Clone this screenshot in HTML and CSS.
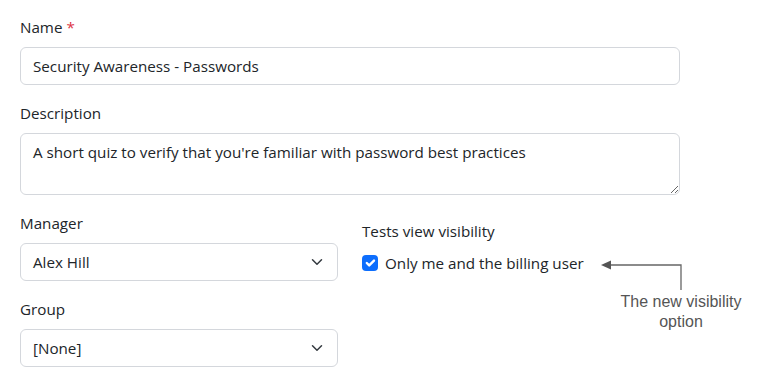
FILE: index.html
```html
<!DOCTYPE html>
<html>
<head>
<meta charset="utf-8">
<link rel="stylesheet" href="styles.css">
</head>
<body>
<div class="page">
  <form class="form">
    <div class="field">
      <label class="label">Name <span class="req">*</span></label>
      <input class="control" type="text" value="Security Awareness - Passwords">
    </div>
    <div class="field">
      <label class="label">Description</label>
      <textarea class="control area" rows="2">A short quiz to verify that you're familiar with password best practices</textarea>
    </div>
    <div class="row">
      <div class="col">
        <div class="field">
          <label class="label">Manager</label>
          <div class="select"><span>Alex Hill</span>
            <svg class="chev" viewBox="0 0 16 16" width="16" height="12"><path d="m2 5 6 6 6-6" fill="none" stroke="#343a40" stroke-width="2" stroke-linecap="round" stroke-linejoin="round"/></svg>
          </div>
        </div>
        <div class="field last">
          <label class="label">Group</label>
          <div class="select"><span>[None]</span>
            <svg class="chev" viewBox="0 0 16 16" width="16" height="12"><path d="m2 5 6 6 6-6" fill="none" stroke="#343a40" stroke-width="2" stroke-linecap="round" stroke-linejoin="round"/></svg>
          </div>
        </div>
      </div>
      <div class="col right">
        <div class="label vis">Tests view visibility</div>
        <div class="check">
          <span class="box"><svg viewBox="0 0 20 20" width="16" height="16"><path d="M6 10l3 3 6-6" fill="none" stroke="#fff" stroke-width="3" stroke-linecap="round" stroke-linejoin="round"/></svg></span>
          <span class="check-label">Only me and the billing user</span>
        </div>
      </div>
    </div>
  </form>
  <svg class="arrow" width="100" height="40" viewBox="0 0 100 40">
    <path d="M10 9 H82 V34" fill="none" stroke="#666" stroke-width="1.3"/>
    <path d="M2 9 L12 4.5 L12 13.5 Z" fill="#555"/>
  </svg>
  <div class="note">The new visibility<br>option</div>
</div>
</body>
</html>
```

FILE: styles.css
```css
html, body {
  margin: 0;
  background: #fff;
}
.page {
  position: relative;
  width: 772px;
  height: 380px;
  overflow: hidden;
  font-family: "Open Sans", "Noto Sans", sans-serif;
  font-size: 15.2px;
  color: #212529;
}
.form {
  padding: 15px 20px 0;
  width: 660px;
}
.field {
  margin-bottom: 16px;
}
.field.last {
  margin-bottom: 0;
}
.label {
  display: block;
  line-height: 24px;
  margin-bottom: 8px;
}
.req {
  color: #dc3545;
}
.control {
  display: block;
  box-sizing: border-box;
  width: 100%;
  height: 38px;
  padding: 6px 12px;
  border: 1px solid #d4d7dc;
  border-radius: 6px;
  font: inherit;
  line-height: 24px;
  color: #212529;
  background: #fff;
  outline: none;
}
.area {
  height: 62px;
  resize: vertical;
}
.row {
  display: flex;
  gap: 24px;
}
.col {
  width: 318px;
}
.select {
  box-sizing: border-box;
  height: 38px;
  padding: 6px 12px;
  border: 1px solid #d4d7dc;
  border-radius: 6px;
  line-height: 24px;
  display: flex;
  align-items: center;
  justify-content: space-between;
}
.chev {
  display: block;
}
.right {
  padding-top: 8px;
}
.vis {
  margin-bottom: 8px;
}
.check {
  display: flex;
  align-items: center;
  gap: 7px;
  height: 24px;
}
.box {
  width: 16px;
  height: 16px;
  border-radius: 4px;
  background: #0d6efd;
  display: flex;
}
.check-label {
  line-height: 24px;
}
.arrow {
  position: absolute;
  left: 599px;
  top: 256px;
}
.note {
  position: absolute;
  left: 601px;
  top: 292px;
  width: 160px;
  text-align: center;
  font-family: "Liberation Sans", Arial, sans-serif;
  font-size: 16px;
  line-height: 20px;
  color: #555;
}
```
